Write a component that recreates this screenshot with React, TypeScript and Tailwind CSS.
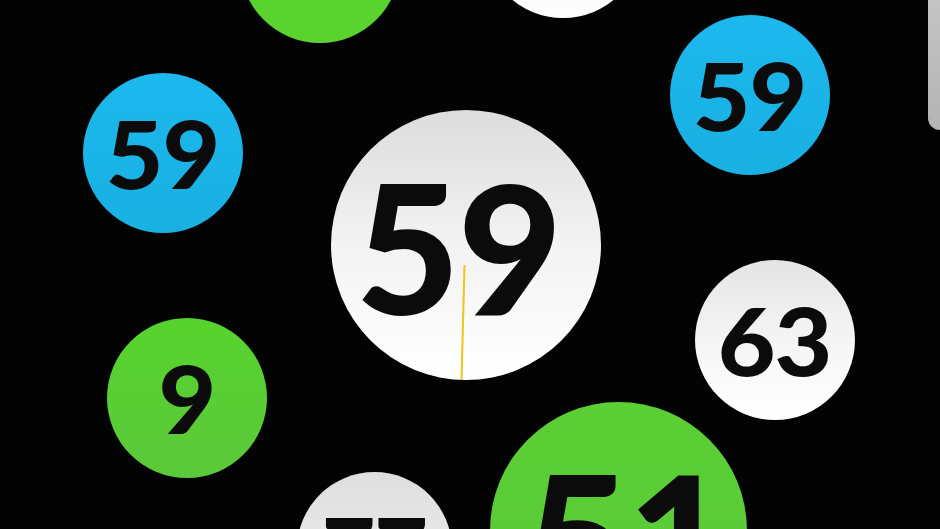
import React from "react";

const font = { fontFamily: "Lato, 'Noto Sans', sans-serif" };

function Digits({ children, className }: { children: React.ReactNode; className: string }) {
  return (
    <span className={`font-black leading-none tracking-[-0.01em] text-[#0b0b0b] ${className}`} style={font}>
      {children}
    </span>
  );
}

export default function App() {
  return (
    <div className="relative h-[529px] w-[940px] overflow-hidden bg-[#030303]">
      <div className="absolute inset-0 blur-[0.6px]">
        {/* top green, partially off-screen */}
        <div className="absolute left-[240px] top-[-117px] flex h-[160px] w-[160px] items-center justify-center rounded-full bg-gradient-to-b from-[#55d82a] to-[#5ad22f]">
          <Digits className="scale-x-[1.06] text-[94px]">59</Digits>
        </div>

        {/* top white, partially off-screen */}
        <div className="absolute left-[483px] top-[-142px] flex h-[160px] w-[160px] items-center justify-center rounded-full bg-gradient-to-b from-[#e2e2e2] to-[#ffffff]">
          <Digits className="text-[94px]">59</Digits>
        </div>

        {/* right edge bar */}
        <div className="absolute left-[928px] top-[-40px] h-[170px] w-[40px] rounded-bl-[12px] bg-gradient-to-b from-[#c9c9c9] to-[#b4b4b4]" />

        {/* left blue */}
        <div className="absolute left-[83px] top-[73px] flex h-[160px] w-[160px] items-center justify-center rounded-full bg-gradient-to-b from-[#1cb8ee] to-[#19b0e2]">
          <Digits className="scale-x-[1.06] text-[94px]">59</Digits>
        </div>

        {/* right blue */}
        <div className="absolute left-[670px] top-[15px] flex h-[160px] w-[160px] items-center justify-center rounded-full bg-gradient-to-b from-[#1cb8ee] to-[#19b0e2]">
          <Digits className="scale-x-[1.06] text-[94px]">59</Digits>
        </div>

        {/* center white */}
        <div className="absolute left-[331px] top-[110px] flex h-[270px] w-[270px] items-center justify-center rounded-full bg-gradient-to-b from-[#dcdcdc] via-[#f3f3f3] to-[#ffffff]">
          <Digits className="pr-[16px] text-[180px]">59</Digits>
          <div className="absolute left-[131px] top-[155px] h-[115px] w-[2px] rotate-[1.5deg] bg-[#f0c419]" />
        </div>

        {/* right white 63 */}
        <div className="absolute left-[695px] top-[260px] flex h-[160px] w-[160px] items-center justify-center rounded-full bg-gradient-to-b from-[#e4e4e4] via-[#f5f5f5] to-[#ffffff]">
          <Digits className="scale-x-[1.06] text-[94px]">63</Digits>
        </div>

        {/* left green 9 */}
        <div className="absolute left-[107px] top-[318px] flex h-[160px] w-[160px] items-center justify-center rounded-full bg-gradient-to-b from-[#56d32c] to-[#5bc93a]">
          <Digits className="scale-x-[1.06] text-[94px]">9</Digits>
        </div>

        {/* bottom white */}
        <div className="absolute left-[297px] top-[472px] flex h-[155px] w-[155px] items-center justify-center rounded-full bg-gradient-to-b from-[#dedede] to-[#f4f4f4]">
          <Digits className="text-[92px]">77</Digits>
        </div>

        {/* bottom green 51 */}
        <div className="absolute left-[490px] top-[402px] flex h-[257px] w-[257px] items-center justify-center rounded-full bg-gradient-to-b from-[#5bcf34] to-[#5ac93a]">
          <Digits className="pl-[18px] pt-[10px] text-[180px]">51</Digits>
        </div>
      </div>
    </div>
  );
}
